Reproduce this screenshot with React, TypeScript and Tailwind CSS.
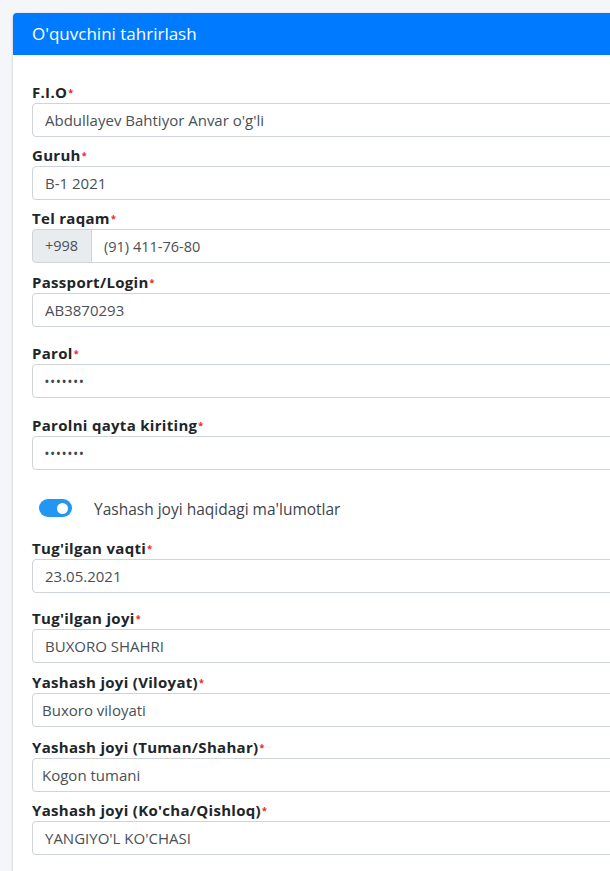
import React from "react";

type Field = {
  label: string;
  value: string;
  mt: string;
  secret?: boolean;
  pad?: string;
  prefix?: string;
};

const top: Field[] = [
  { label: "F.I.O", value: "Abdullayev Bahtiyor Anvar o'g'li", mt: "mt-0" },
  { label: "Guruh", value: "B-1 2021", mt: "mt-2" },
  { label: "Tel raqam", value: "(91) 411-76-80", mt: "mt-2", prefix: "+998" },
  { label: "Passport/Login", value: "AB3870293", mt: "mt-[9px]" },
  { label: "Parol", value: "•••••••", mt: "mt-4", secret: true },
  { label: "Parolni qayta kiriting", value: "•••••••", mt: "mt-[17px]", secret: true },
];

const bottom: Field[] = [
  { label: "Tug'ilgan vaqti", value: "23.05.2021", mt: "mt-5" },
  { label: "Tug'ilgan joyi", value: "BUXORO SHAHRI", mt: "mt-[15px]" },
  { label: "Yashash joyi (Viloyat)", value: "Buxoro viloyati", mt: "mt-[9px]", pad: "pl-[9px]" },
  { label: "Yashash joyi (Tuman/Shahar)", value: "Kogon tumani", mt: "mt-[10px]", pad: "pl-[9px]" },
  { label: "Yashash joyi (Ko'cha/Qishloq)", value: "YANGIYO'L KO'CHASI", mt: "mt-2" },
];

function FormField({ f }: { f: Field }) {
  return (
    <div className={f.mt}>
      <label className="block leading-5 text-[15px] tracking-[0.3px] font-bold text-[#212529] mb-px">
        {f.label}
        <span className="text-[9px] font-bold text-[#ee1c25] align-top relative top-[1px] ml-px">*</span>
      </label>
      {f.prefix ? (
        <div className="flex h-[34px]">
          <span className="flex items-center px-3 w-[60px] bg-[#e9ecef] border border-[#ced4da] rounded-l text-[14.5px] text-[#495057]">
            {f.prefix}
          </span>
          <input
            readOnly
            defaultValue={f.value}
            className="flex-1 h-full px-3 border border-l-0 border-[#ced4da] rounded-r bg-white text-[14.5px] text-[#495057] outline-none"
          />
        </div>
      ) : (
        <input
          readOnly
          defaultValue={f.value}
          className={`block w-full h-[34px] ${f.pad ?? "pl-3"} pr-3 border border-[#ced4da] rounded bg-white ${
            f.secret ? "text-[10px] font-bold tracking-[2px] text-[#3d444b]" : "text-[15px] text-[#495057]"
          } outline-none`}
        />
      )}
    </div>
  );
}

export default function App() {
  return (
    <div className="h-screen overflow-hidden bg-[#f4f6f9] pt-[13px] pl-[13px] font-['Open_Sans',sans-serif]">
      <div className="w-[650px] bg-white rounded shadow-[0_0_1px_rgba(0,0,0,0.125),0_1px_3px_rgba(0,0,0,0.2)]">
        {/* Header */}
        <div className="h-[42px] flex items-center pl-[19px] bg-[#007bff] rounded-t">
          <h3 className="text-[17px] text-white">O'quvchini tahrirlash</h3>
        </div>

        {/* Body */}
        <div className="pt-[27px] pl-[19px] pr-5 pb-10">
          {top.map((f) => (
            <FormField key={f.label} f={f} />
          ))}

          <div className="mt-7 h-5 flex items-center">
            <span className="ml-[7px] w-[33px] h-[18px] rounded-full bg-[#2196f3] flex items-center justify-end pr-[4px]">
              <span className="w-[11px] h-[11px] rounded-full bg-white" />
            </span>
            <span className="ml-[22px] pt-[3px] text-[15.5px] text-[#3d444b]">
              Yashash joyi haqidagi ma'lumotlar
            </span>
          </div>

          {bottom.map((f) => (
            <FormField key={f.label} f={f} />
          ))}
        </div>
      </div>
    </div>
  );
}
